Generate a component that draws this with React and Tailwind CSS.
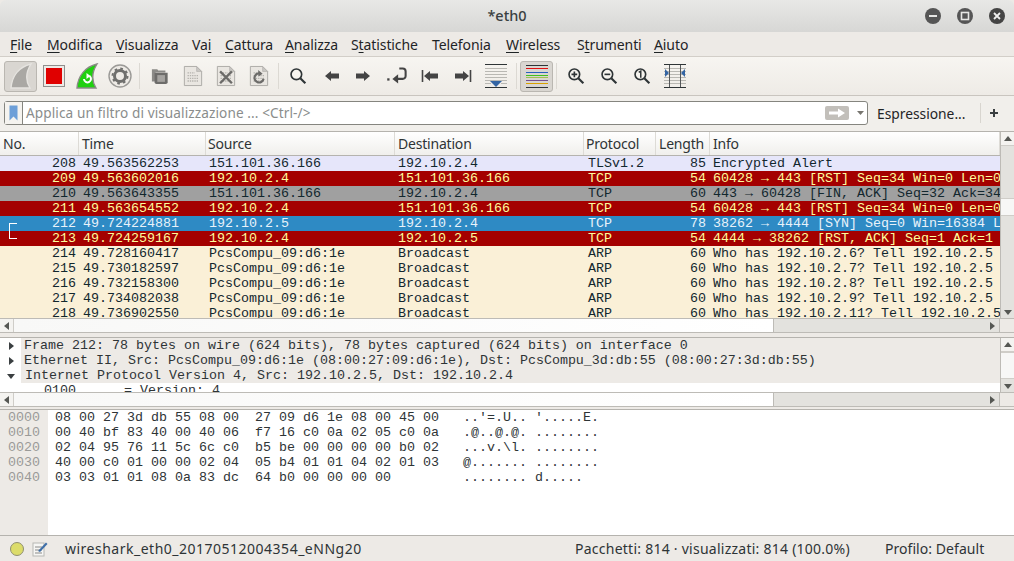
import React from 'react'

const ui = 'font-["Noto_Sans",sans-serif]'
const mono = 'font-["Liberation_Mono",monospace] text-[13.33px]'

const menus = [
  ['', 'F', 'ile', 'w-[37px]'],
  ['', 'M', 'odifica', 'w-[69px]'],
  ['', 'V', 'isualizza', 'w-[76px]'],
  ['Va', 'i', '', 'w-[33px]'],
  ['', 'C', 'attura', 'w-[60px]'],
  ['', 'A', 'nalizza', 'w-[66px]'],
  ['S', 't', 'atistiche', 'w-[81px]'],
  ['Telefon', 'i', 'a', 'w-[74px]'],
  ['', 'W', 'ireless', 'w-[71px]'],
  ['S', 't', 'rumenti', 'w-[77px]'],
  ['', 'A', 'iuto', 'w-[50px]'],
]

const rows = [
  ['208', '49.563562253', '151.101.36.166', '192.10.2.4', 'TLSv1.2', '85', 'Encrypted Alert', 'lav'],
  ['209', '49.563602016', '192.10.2.4', '151.101.36.166', 'TCP', '54', '60428 → 443 [RST] Seq=34 Win=0 Len=0', 'red'],
  ['210', '49.563643355', '151.101.36.166', '192.10.2.4', 'TCP', '60', '443 → 60428 [FIN, ACK] Seq=32 Ack=34 Win=0', 'gray'],
  ['211', '49.563654552', '192.10.2.4', '151.101.36.166', 'TCP', '54', '60428 → 443 [RST] Seq=34 Win=0 Len=0', 'red'],
  ['212', '49.724224881', '192.10.2.5', '192.10.2.4', 'TCP', '78', '38262 → 4444 [SYN] Seq=0 Win=16384 Len=0 MSS=1460', 'sel'],
  ['213', '49.724259167', '192.10.2.4', '192.10.2.5', 'TCP', '54', '4444 → 38262 [RST, ACK] Seq=1 Ack=1 Win=0 Len=0', 'red'],
  ['214', '49.728160417', 'PcsCompu_09:d6:1e', 'Broadcast', 'ARP', '60', 'Who has 192.10.2.6? Tell 192.10.2.5', 'arp'],
  ['215', '49.730182597', 'PcsCompu_09:d6:1e', 'Broadcast', 'ARP', '60', 'Who has 192.10.2.7? Tell 192.10.2.5', 'arp'],
  ['216', '49.732158300', 'PcsCompu_09:d6:1e', 'Broadcast', 'ARP', '60', 'Who has 192.10.2.8? Tell 192.10.2.5', 'arp'],
  ['217', '49.734082038', 'PcsCompu_09:d6:1e', 'Broadcast', 'ARP', '60', 'Who has 192.10.2.9? Tell 192.10.2.5', 'arp'],
  ['218', '49.736902550', 'PcsCompu_09:d6:1e', 'Broadcast', 'ARP', '60', 'Who has 192.10.2.11? Tell 192.10.2.5', 'arp'],
]

const rowColors = {
  lav: 'bg-[#e6e6fa] text-[#12272e]',
  red: 'bg-[#a40000] text-[#fffc9c]',
  gray: 'bg-[#a0a0a0] text-[#12272e]',
  sel: 'bg-[#2e8ac4] text-[#e8f2fa]',
  arp: 'bg-[#faf0d7] text-[#12272e]',
}

const cols = 'grid grid-cols-[79px_127px_189px_189px_72px_54px_290px]'

const hexRows = [
  ['0000', "08 00 27 3d db 55 08 00  27 09 d6 1e 08 00 45 00   ..'=.U.. '.....E."],
  ['0010', '00 40 bf 83 40 00 40 06  f7 16 c0 0a 02 05 c0 0a   .@..@.@. ........'],
  ['0020', '02 04 95 76 11 5c 6c c0  b5 be 00 00 00 00 b0 02   ...v.\\l. ........'],
  ['0030', '40 00 c0 01 00 00 02 04  05 b4 01 01 04 02 01 03   @....... ........'],
  ['0040', '03 03 01 01 08 0a 83 dc  64 b0 00 00 00 00         ........ d.....'],
]

function Fin({ fill, stroke, children }) {
  return (
    <svg width="24" height="26" viewBox="0 0 24 26">
      <path d="M2 25C3 13 10 4 22 1C17 9 16 17 21 25Z" fill={fill} stroke={stroke} strokeWidth="1.4" />
      {children}
    </svg>
  )
}

function PaperIcon({ children }) {
  return (
    <svg width="20" height="24" viewBox="0 0 22 24">
      <path d="M1.5 1.5H15L20.5 7V22.5H1.5Z" fill="#e9e6e1" stroke="#a9a7a3" />
      <path d="M15 1.5V7H20.5Z" fill="#c9c7c3" stroke="#a9a7a3" strokeWidth="0.6" />
      <g stroke="#b5b3ae" strokeWidth="1.4" strokeDasharray="1.5 1">
        <path d="M5 8.5H13" />
        <path d="M5 11.5H17" />
        <path d="M5 14.5H17" />
        <path d="M5 17.5H17" />
      </g>
      {children}
    </svg>
  )
}

function Lens({ children }) {
  return (
    <svg width="18" height="18" viewBox="0 0 22 22" fill="none">
      <circle cx="9" cy="9" r="6.5" stroke="#2e3436" strokeWidth="2" fill="#f6f4ef" />
      <path d="M13.8 13.8L20 20" stroke="#2e3436" strokeWidth="2.6" />
      {children}
    </svg>
  )
}

function ArrowIcon({ dir, bar }) {
  return (
    <svg width="18" height="16" viewBox="0 0 18 16" className={dir === 'left' ? '' : 'scale-x-[-1]'}>
      {bar && <path d="M1.5 2V14" stroke="#444" strokeWidth="1.6" />}
      <path d="M3 8L9 3V5.5H17V10.5H9V13Z" fill="#444" />
    </svg>
  )
}

const tools = [
  { active: true, icon: <Fin fill="#aaa8a4" stroke="#e6e4e0" /> },
  {
    icon: (
      <svg width="22" height="22" viewBox="0 0 22 22">
        <rect x="0.5" y="0.5" width="21" height="21" fill="#eeeae6" stroke="#8f8f8d" />
        <rect x="3" y="3" width="16" height="16" fill="#e00000" />
      </svg>
    ),
  },
  {
    icon: (
      <Fin fill="#1fd00f" stroke="#8a8a86">
        <path d="M9 16A3.5 3.5 0 1 0 14.5 13" fill="none" stroke="#fff" strokeWidth="2" />
        <path d="M11.5 10L15.5 13L11.5 16Z" fill="#fff" />
      </Fin>
    ),
  },
  {
    icon: (
      <svg width="24" height="24" viewBox="0 0 24 24" fill="none">
        <circle cx="12" cy="12" r="11" fill="#eeebe6" stroke="#9b9a97" strokeWidth="1.4" />
        <circle cx="12" cy="12" r="5.5" stroke="#6f6f6d" strokeWidth="3" />
        <circle cx="12" cy="12" r="7.5" stroke="#6f6f6d" strokeWidth="2" strokeDasharray="2.6 3.3" />
      </svg>
    ),
  },
  { sep: 'w-[7px]' },
  {
    icon: (
      <svg width="18" height="18" viewBox="0 0 20 20">
        <path d="M1 4V2.5H7L8 4H16V6H5V16H1Z" fill="#8b8a87" />
        <path d="M4 6.5H18.5V17A2 2 0 0 1 16.5 19H6A2 2 0 0 1 4 17Z" fill="#6d6c6a" />
        <rect x="7" y="9" width="8.5" height="7.5" fill="#a5a3a0" />
      </svg>
    ),
  },
  { icon: <PaperIcon /> },
  {
    icon: (
      <PaperIcon>
        <path d="M4.5 7L17.5 20M17.5 7L4.5 20" stroke="#6c6b69" strokeWidth="2.6" />
      </PaperIcon>
    ),
  },
  {
    icon: (
      <PaperIcon>
        <path d="M13 9.5A5 5 0 1 0 16 15" fill="none" stroke="#6c6b69" strokeWidth="2.4" />
        <path d="M10 5.5L15 9.5L10.5 12.5Z" fill="#6c6b69" />
      </PaperIcon>
    ),
  },
  { sep: 'w-[6px]' },
  { icon: <Lens /> },
  { icon: <ArrowIcon dir="left" /> },
  { icon: <ArrowIcon dir="right" /> },
  {
    icon: (
      <svg width="18" height="16" viewBox="0 0 18 16" fill="none" className="scale-[1.15]">
        <path d="M11 1.5H14A2.5 2.5 0 0 1 16.5 4V8A2.5 2.5 0 0 1 14 10.5H8" stroke="#444" strokeWidth="1.8" />
        <path d="M5 10.5L10 6.5V14.5Z" fill="#444" />
        <rect x="0.5" y="10" width="2" height="2" fill="#444" />
      </svg>
    ),
  },
  { icon: <ArrowIcon dir="left" bar /> },
  { icon: <ArrowIcon dir="right" bar /> },
  {
    icon: (
      <svg width="24" height="24" viewBox="0 0 24 24">
        <path d="M1 0.5H23M1 23.5H23" stroke="#2e3436" strokeWidth="1" />
        <path d="M1 4.5H23M1 7.5H23M1 10.5H23M1 13.5H23M1 16.5H23M1 19.5H7M17 19.5H23" stroke="#b9b8b3" strokeWidth="1" />
        <path d="M6 17H18L12 23Z" fill="#3465a4" />
      </svg>
    ),
  },
  { sep: 'w-[8px]' },
  {
    active: true,
    icon: (
      <svg width="22" height="24" viewBox="0 0 22 24" fill="none">
        <path d="M0 1.5H22" stroke="#2e3436" />
        <path d="M0 4.5H22" stroke="#e01010" />
        <path d="M0 8.5H22" stroke="#2a5fc0" />
        <path d="M0 11.5H22" stroke="#40c020" />
        <path d="M0 13.5H22" stroke="#a0c050" />
        <path d="M0 16.5H22" stroke="#75508f" />
        <path d="M0 19.5H22" stroke="#d8a000" />
        <path d="M0 23.5H22" stroke="#2e3436" />
      </svg>
    ),
  },
  { sep: 'w-[6px]' },
  {
    icon: (
      <Lens>
        <path d="M5.5 9H12.5M9 5.5V12.5" stroke="#2e3436" strokeWidth="2" />
      </Lens>
    ),
  },
  {
    icon: (
      <Lens>
        <path d="M5.5 9H12.5" stroke="#2e3436" strokeWidth="2" />
      </Lens>
    ),
  },
  {
    icon: (
      <Lens>
        <path d="M7 6.5L9.5 5V13" stroke="#2e3436" strokeWidth="1.8" />
      </Lens>
    ),
  },
  {
    icon: (
      <svg width="24" height="24" viewBox="0 0 24 24">
        <path d="M1 4.5H23M1 7.5H23M1 10.5H23M1 13.5H23M1 16.5H23M1 19.5H23" stroke="#b9b8b3" />
        <path d="M1 0.5H23M1 23.5H23" stroke="#2e3436" />
        <path d="M6.5 1V23M17.5 1V23" stroke="#55585a" strokeWidth="1" />
        <path d="M2 5L6 9L2 13Z" fill="#3465a4" />
        <path d="M22 5L18 9L22 13Z" fill="#3465a4" />
      </svg>
    ),
  },
]

function Tri({ dir, color = '#555753' }) {
  const d = { left: 'M7 1V9L2 5Z', right: 'M3 1V9L8 5Z', up: 'M1 7H9L5 2Z', down: 'M1 3H9L5 8Z' }
  return (
    <svg width="10" height="10" viewBox="0 0 10 10">
      <path d={d[dir]} fill={color} />
    </svg>
  )
}

function HScroll({ thumb }) {
  return (
    <div className="flex h-[13px] shrink-0 border-y border-[#bdbbb6] box-content bg-[#e3e2de]">
      <div className="flex w-[14px] items-center justify-center border-r border-[#cfcdc8] bg-[#f4f3f0]">
        <Tri dir="left" />
      </div>
      <div className="flex-1 flex">
        <div className={`${thumb} bg-gradient-to-r from-[#f8f8f7] to-[#ffffff] border-r border-[#bdbbb6]`} />
      </div>
      <div className="flex w-[14px] items-center justify-center">
        <Tri dir="right" />
      </div>
      <div className="w-[15px] border-l border-[#bdbbb6] bg-[#edeae6]" />
    </div>
  )
}

function VScroll({ top, size }) {
  return (
    <div className="flex w-[14px] shrink-0 flex-col border-l border-[#bdbbb6] bg-[#e3e2de]">
      <div className="flex h-[14px] items-center justify-center border-b border-[#cfcdc8] bg-[#f4f3f0]">
        <Tri dir="up" />
      </div>
      <div className="flex-1 flex flex-col">
        <div className={top} />
        <div className={`${size} bg-[#f7f7f6] border-y border-[#cfcdc8]`} />
      </div>
      <div className="flex h-[13px] items-center justify-center">
        <Tri dir="down" />
      </div>
    </div>
  )
}

export default function App() {
  return (
    <div className={`${ui} flex h-[561px] w-[1014px] flex-col overflow-hidden bg-[#edeae6] text-[#2e3436]`}>
      {/* titlebar */}
      <div className="grid h-[32px] shrink-0 grid-cols-[1fr_auto_1fr] items-center rounded-t-[6px] bg-gradient-to-b from-[#e8e8e6] to-[#d7d7d5]">
        <div />
        <div className="text-[14.5px] font-medium text-[#3a3f41]">*eth0</div>
        <div className="flex items-center justify-end gap-[16px] pr-[9px]">
          <svg width="16" height="16" viewBox="0 0 16 16">
            <circle cx="8" cy="8" r="8" fill="#555" />
            <path d="M4 8H12" stroke="#e6e6e4" strokeWidth="2" />
          </svg>
          <svg width="16" height="16" viewBox="0 0 16 16" fill="none">
            <circle cx="8" cy="8" r="8" fill="#555" />
            <rect x="4.5" y="4.5" width="7" height="7" stroke="#e6e6e4" strokeWidth="1.6" />
          </svg>
          <svg width="16" height="16" viewBox="0 0 16 16">
            <circle cx="8" cy="8" r="8" fill="#444" />
            <path d="M5 5L11 11M11 5L5 11" stroke="#eeeeee" strokeWidth="1.8" />
          </svg>
        </div>
      </div>

      {/* menubar */}
      <div className="flex h-[25px] shrink-0 items-center border-b border-[#d2cec8] pl-[10px] text-[14px] text-[#1f2426]">
        {menus.map((m) => (
          <div key={m[1] + m[2]} className={`${m[3]} whitespace-pre tracking-[-0.1px]`}>
            {m[0]}
            <span className="underline underline-offset-[2px] decoration-1">{m[1]}</span>
            {m[2]}
          </div>
        ))}
      </div>

      {/* toolbar */}
      <div className="flex h-[39px] shrink-0 items-center border-b border-[#c9c5bf] bg-gradient-to-b from-[#f7f5f1] to-[#eeebe6] pl-[4px]">
        {tools.map((t, i) =>
          t.sep ? (
            <div key={i} className={`${t.sep} flex h-full items-center justify-center`}>
              <div className="h-[26px] w-px bg-[#dcd9d3]" />
            </div>
          ) : (
            <div
              key={i}
              className={`flex h-[31px] w-[33px] items-center justify-center rounded-[3px] ${
                t.active ? 'border border-[#bab7b1] bg-[#d9d6d1]' : ''
              }`}>
              {t.icon}
            </div>
          ),
        )}
      </div>

      {/* filter bar */}
      <div className="flex h-[35px] shrink-0 items-start bg-[#f1efeb] pl-[4px] pt-[5px]">
        <div className="flex h-[24px] w-[864px] items-center rounded-[3px] border border-[#85857f] bg-white">
          <div className="flex h-full w-[18px] items-center justify-center border-r border-[#85857f] bg-[#f5f3ef]">
            <svg width="9" height="16" viewBox="0 0 9 16">
              <path d="M0.5 0.5H8.5V15.5L4.5 11.5L0.5 15.5Z" fill="#6d9fd8" />
            </svg>
          </div>
          <div className="flex-1 pl-[3px] text-[13.6px] tracking-[0.1px] text-[#8a8d8c]">Applica un filtro di visualizzazione ... &lt;Ctrl-/&gt;</div>
          <div className="flex h-[14px] w-[24px] items-center justify-center rounded-[2px] bg-[#c2bfba]">
            <svg width="18" height="10" viewBox="0 0 18 10">
              <path d="M1 3.5H10V0.5L17 5L10 9.5V6.5H1Z" fill="#fff" />
            </svg>
          </div>
          <div className="flex w-[18px] items-center justify-end pr-[1px]">
            <svg width="10" height="6" viewBox="0 0 10 6">
              <path d="M1 1H8L4.5 5Z" fill="#77756f" />
            </svg>
          </div>
        </div>
        <div className="ml-[9px] h-[24px] w-[103px] text-[13.8px] leading-[25px] text-[#1f2426]">Espressione...</div>
        <div className="mt-[2px] h-[20px] w-px bg-[#d8d5cf]" />
        <div className="flex h-[24px] w-[26px] items-center justify-center">
          <svg width="10" height="10" viewBox="0 0 10 10">
            <path d="M5 1V9M1 5H9" stroke="#3a3f41" strokeWidth="2" />
          </svg>
        </div>
      </div>

      {/* packet list */}
      <div className="flex h-[187px] shrink-0 border-t border-[#b5b3ae] bg-white">
        <div className="min-w-0 flex-1 overflow-hidden">
          <div className={`${cols} h-[24px] border-b border-[#b5b3ae] bg-gradient-to-b from-[#ffffff] to-[#f0efec] text-[14px] leading-[23px] tracking-[-0.2px] text-[#2e3436]`}>
            {['No.', 'Time', 'Source', 'Destination', 'Protocol', 'Length', 'Info'].map((h) => (
              <div key={h} className={`border-r border-[#dddbd6] ${h === 'Protocol' || h === 'Source' ? 'pl-[2px]' : 'pl-[3px]'}`}>
                {h}
              </div>
            ))}
          </div>
          {rows.map((r) => (
            <div key={r[0]} className={`${cols} ${rowColors[r[7]]} ${mono} h-[15px] leading-[15px] whitespace-pre`}>
              <div className="relative pr-[3px] text-right">
                {r[0] === '212' && <div className="absolute left-[9px] top-[7px] h-[8px] w-[8px] border-l border-t border-white" />}
                {r[0] === '213' && <div className="absolute left-[9px] top-0 h-[8px] w-[8px] border-b border-l border-white" />}
                {r[0]}
              </div>
              <div className="pl-[4px]">{r[1]}</div>
              <div className="pl-[3px]">{r[2]}</div>
              <div className="pl-[3px]">{r[3]}</div>
              <div className="pl-[4px]">{r[4]}</div>
              <div className="pr-[4px] text-right">{r[5]}</div>
              <div className="overflow-hidden pl-[3px]">{r[6]}</div>
            </div>
          ))}
        </div>
        <VScroll top="h-[52px]" size="h-[18px]" />
      </div>
      <HScroll thumb="w-[760px]" />

      {/* packet details */}
      <div className="mt-[4px] flex h-[55px] shrink-0 border-t border-[#b5b3ae] bg-white">
        <div className={`${mono} min-w-0 flex-1 overflow-hidden leading-[15px] text-[#2e3436] whitespace-pre`}>
          <div className="flex h-[15px]">
            <div className="flex w-[21px] items-center justify-center"><Tri dir="right" color="#3a3f41" /></div>
            <div className="flex-1 bg-[#edeae6] pl-[3px]">Frame 212: 78 bytes on wire (624 bits), 78 bytes captured (624 bits) on interface 0</div>
          </div>
          <div className="flex h-[15px]">
            <div className="flex w-[21px] items-center justify-center"><Tri dir="right" color="#3a3f41" /></div>
            <div className="flex-1 bg-[#edeae6] pl-[3px]">Ethernet II, Src: PcsCompu_09:d6:1e (08:00:27:09:d6:1e), Dst: PcsCompu_3d:db:55 (08:00:27:3d:db:55)</div>
          </div>
          <div className="flex h-[15px]">
            <div className="flex w-[21px] items-center justify-center"><Tri dir="down" color="#3a3f41" /></div>
            <div className="flex-1 bg-[#edeae6] pl-[4px]">Internet Protocol Version 4, Src: 192.10.2.5, Dst: 192.10.2.4</div>
          </div>
          <div className="pl-[44px]">0100 .... = Version: 4</div>
        </div>
        <VScroll top="h-0" size="h-[27px]" />
      </div>
      <HScroll thumb="w-[760px]" />

      {/* packet bytes */}
      <div className={`${mono} mt-[2px] h-[127px] shrink-0 border-y border-[#b5b3ae] bg-white leading-[15px] text-[#2e3436] whitespace-pre`}>
        <div className="flex h-full">
          <div className="w-[48px] bg-[#edeae6] pl-[8px] text-[#9a9a98]">
            {hexRows.map((r) => (
              <div key={r[0]}>{r[0]}</div>
            ))}
          </div>
          <div className="flex-1 pl-[7px]">
            {hexRows.map((r) => (
              <div key={r[0]}>{r[1]}</div>
            ))}
          </div>
        </div>
      </div>

      {/* status bar */}
      <div className="flex flex-1 items-center text-[14px] text-[#2e3436]">
        <div className="flex w-[565px] items-center pl-[10px]">
          <svg width="14" height="14" viewBox="0 0 14 14">
            <circle cx="7" cy="7" r="6.5" fill="#dcdc6a" stroke="#8f8f70" />
          </svg>
          <svg width="16" height="16" viewBox="0 0 16 16" className="ml-[8px]">
            <rect x="1" y="2" width="11" height="13" fill="#f6f6f4" stroke="#b8b8b4" />
            <path d="M3 6H10M3 9H10M3 12H10" stroke="#8a8a88" />
            <path d="M6 10L14 1.5L15.5 3L8 11Z" fill="#3f6fa8" />
          </svg>
          <span className="ml-[17px] tracking-[0.5px]">wireshark_eth0_20170512004354_eNNg20</span>
        </div>
        <div className="ml-[10px] w-[310px] tracking-[0.25px]">Pacchetti: 814 · visualizzati: 814 (100.0%)</div>
        <div className="tracking-[0.05px]">Profilo: Default</div>
      </div>
    </div>
  )
}
